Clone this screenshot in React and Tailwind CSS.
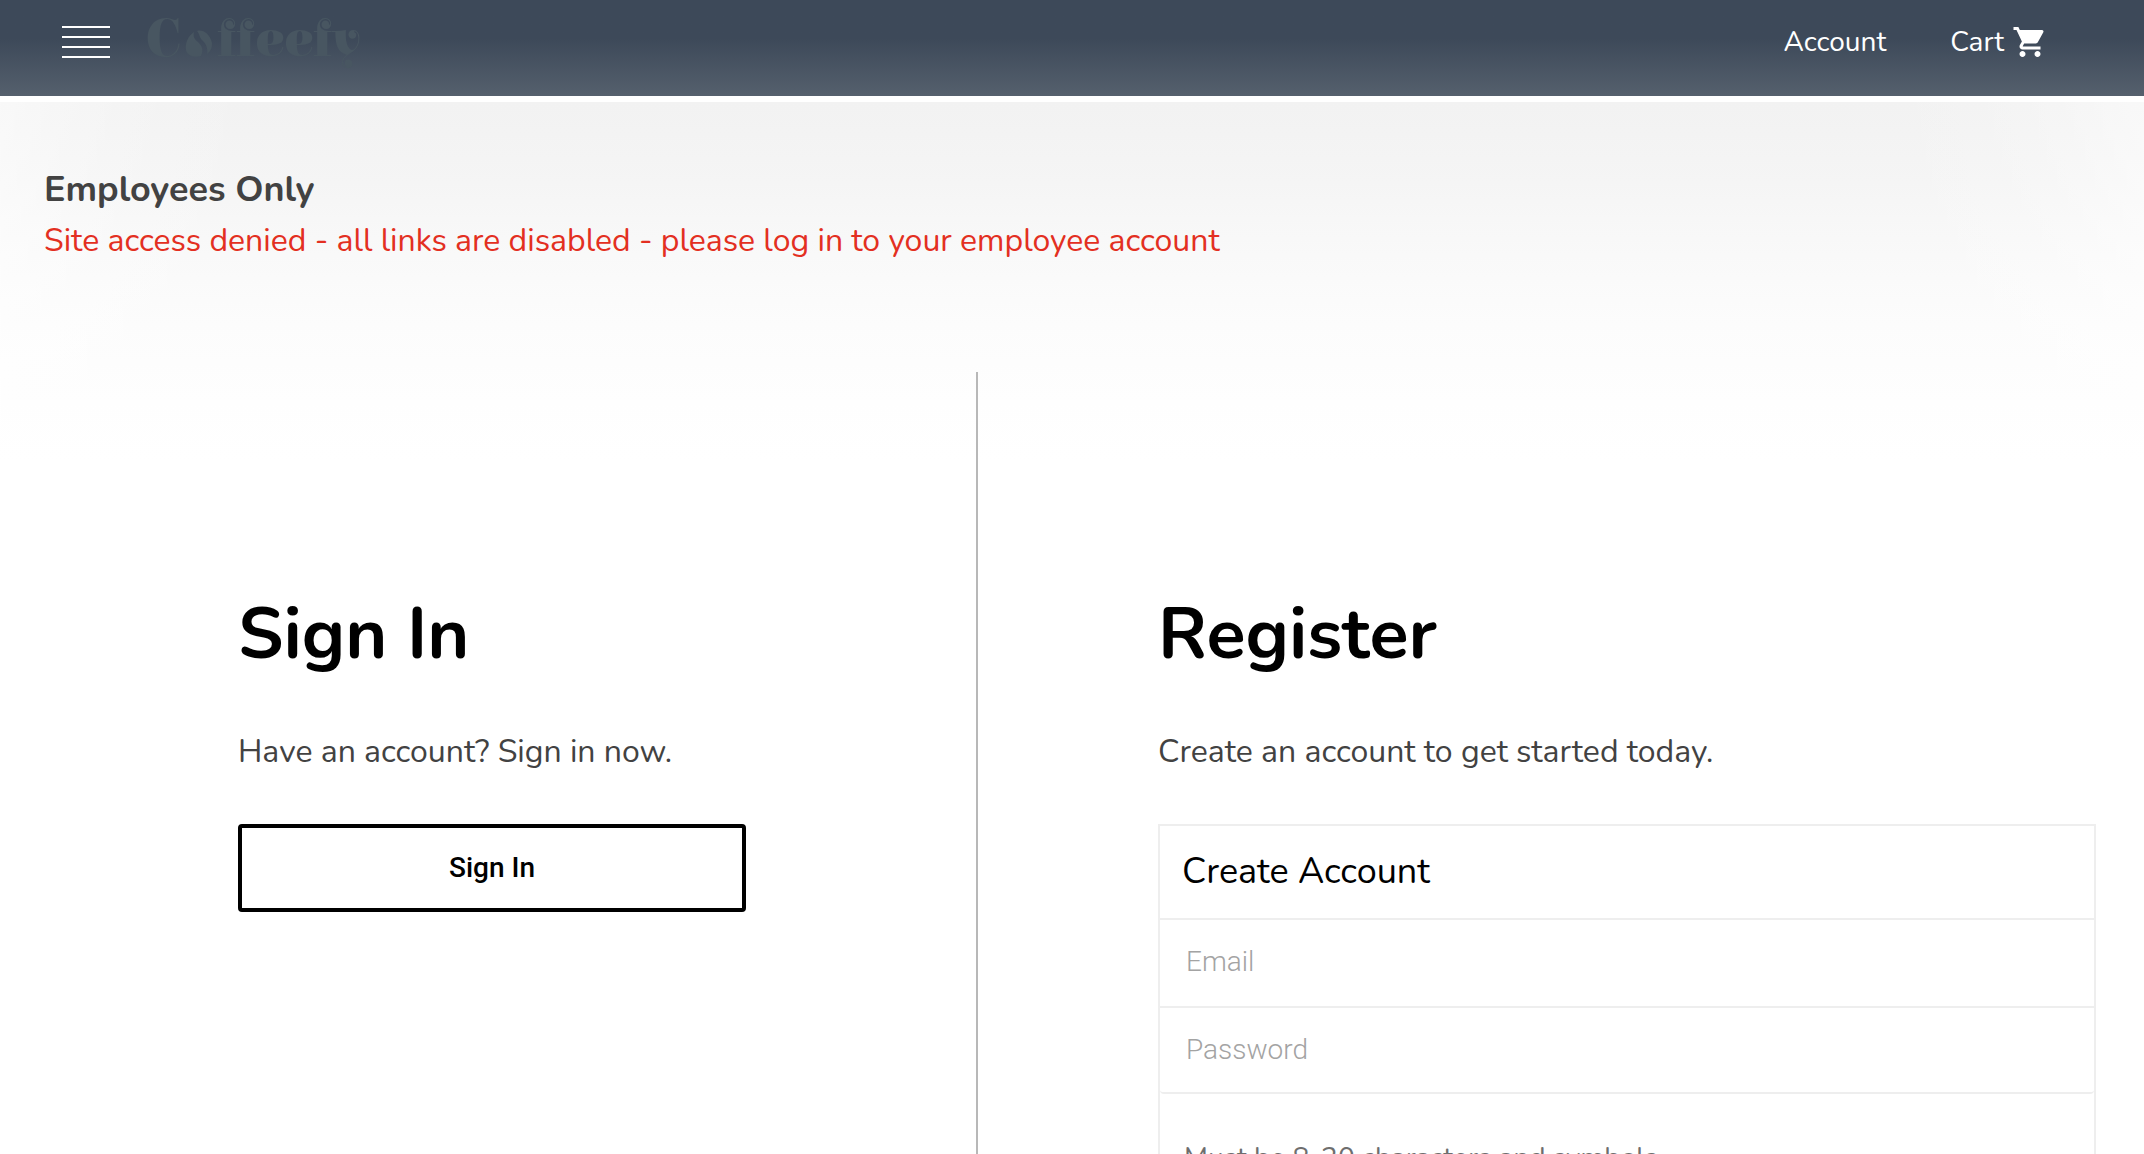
import { MdShoppingCart } from "react-icons/md";

const bars = [0, 1, 2, 3];

function Logo() {
  return (
    <a
      href="#home"
      aria-label="Coffeefy"
      className="flex items-center gap-1 font-[Elsie,'Liberation_Serif',serif] text-[54px] leading-16 font-bold text-[#485661]"
    >
      <span>C</span>
      <svg viewBox="0 0 28 28" className="mt-2 size-7 fill-current" aria-hidden="true">
        <path d="M9 2 C3 6 0 13 1 20 C2 25 7 28 16 26 C19 20 17 16 13 12 C9 9 8 6 9 2 Z" />
        <path d="M12 1 C18 -1 25 4 27 13 C27 18 26 21 22 24 C23 18 21 14 18 11 C14 8 15 4 12 1 Z" />
      </svg>
      <span>ffeefy</span>
    </a>
  );
}

function Header() {
  return (
    <header className="flex h-24 items-start justify-between bg-linear-to-b from-[#3d4959] from-40% to-[#55606d] pr-24 pl-[62px] text-white">
      <div className="flex items-start gap-9 pt-2">
        <button type="button" aria-label="Menu" className="mt-[18px] flex w-12 flex-col gap-2">
          {bars.map((bar) => (
            <span key={bar} className="h-0.5 w-full bg-white" />
          ))}
        </button>
        <Logo />
      </div>
      <nav className="flex items-center gap-16 pt-6 text-[28px] leading-9">
        <a href="#account">Account</a>
        <a href="#cart" className="flex items-center gap-2">
          Cart
          <MdShoppingCart className="size-9" aria-hidden="true" />
        </a>
      </nav>
    </header>
  );
}

/* Soft grey shade under the header that fades out downwards and to both sides. */
function Shade() {
  return (
    <div className="absolute inset-x-0 top-0 -z-10 flex h-90 justify-between bg-[linear-gradient(#f2f2f2,#f3f3f3_32px,#f5f5f5_80px,#f9f9f9_154px,#fcfcfc_222px,#fefefe_300px,#ffffff)]">
      <div className="w-80 bg-[linear-gradient(to_right,rgba(255,255,255,0.5),rgba(255,255,255,0.31)_62px,rgba(255,255,255,0.16)_125px,rgba(255,255,255,0.07)_187px,rgba(255,255,255,0.02)_250px,rgba(255,255,255,0))]" />
      <div className="w-80 bg-[linear-gradient(to_left,rgba(255,255,255,0.5),rgba(255,255,255,0.31)_62px,rgba(255,255,255,0.16)_125px,rgba(255,255,255,0.07)_187px,rgba(255,255,255,0.02)_250px,rgba(255,255,255,0))]" />
    </div>
  );
}

export default function App() {
  return (
    <div className="h-screen overflow-hidden bg-white font-[Nunito,Lato,sans-serif] text-black">
      <Header />
      <main className="relative isolate mt-1.5">
        <Shade />
        <section className="px-11 pt-16">
          <h2 className="text-[36px] leading-12 font-bold text-[#424242]">Employees Only</h2>
          <p className="mt-[3px] text-[32px] leading-12 text-[#e32f21]">
            Site access denied - all links are disabled - please log in to your employee account
          </p>
        </section>

        <div className="mt-[107px] grid grid-cols-[61fr_73fr]">
          <section className="pt-[212px] pr-[230px] pl-[238px]">
            <h1 className="text-[72px] leading-[100px] font-bold">Sign In</h1>
            <p className="mt-11 text-[32px] leading-12 text-[#424242]">
              Have an account? Sign in now.
            </p>
            <button
              type="button"
              className="mt-12 h-22 w-full rounded border-4 border-black bg-white font-[Roboto,sans-serif] text-[28px] font-medium"
            >
              Sign In
            </button>
          </section>

          <section className="border-l-2 border-[#b8b8b8] pt-[212px] pr-12 pl-[180px]">
            <h1 className="text-[72px] leading-[100px] font-bold">Register</h1>
            <p className="mt-11 text-[32px] leading-12 text-[#424242]">
              Create an account to get started today.
            </p>
            <form className="mt-12 border-2 border-[#eeeeee] bg-white">
              <h2 className="px-[22px] py-5 text-[36px] leading-[52px]">
                Create Account
              </h2>
              <input
                type="email"
                aria-label="Email"
                placeholder="Email"
                className="block h-[90px] w-full border-y-2 border-[#eeeeee] px-[26px] pb-1 font-[Roboto,sans-serif] text-[28px] font-light placeholder:text-[#a3a3a3]"
              />
              <input
                type="password"
                aria-label="Password"
                placeholder="Password"
                className="block h-[86px] w-full rounded-b border-b-2 border-[#eeeeee] px-[26px] pb-0.5 font-[Roboto,sans-serif] text-[28px] font-light placeholder:text-[#a3a3a3]"
              />
              <p className="px-6 pt-[46px] pb-8 text-[28px] leading-9 text-[#6e6e6e]">
                Must be 8-20 characters and symbols
              </p>
            </form>
          </section>
        </div>
      </main>
    </div>
  );
}
